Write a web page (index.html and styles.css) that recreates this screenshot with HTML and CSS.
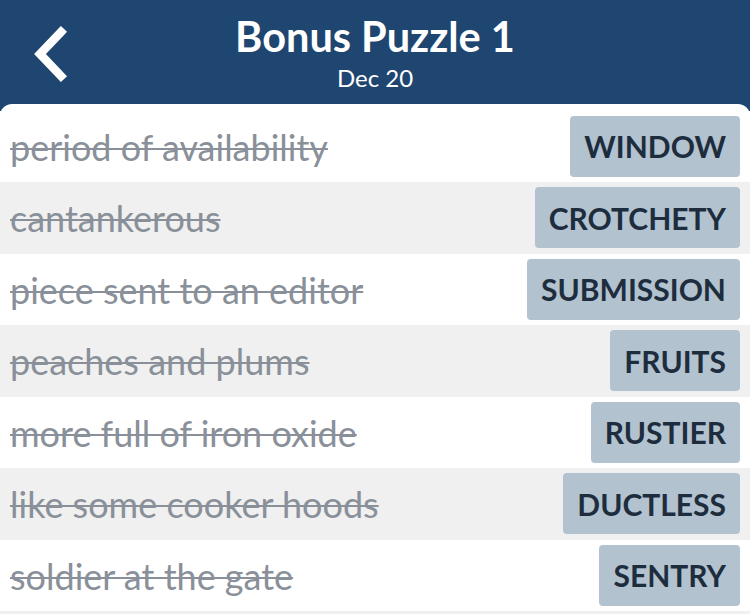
FILE: index.html
```html
<!DOCTYPE html>
<html>
<head>
<meta charset="utf-8">
<link rel="stylesheet" href="styles.css">
</head>
<body>
<div class="screen">
  <header class="topbar">
    <div class="back">
      <svg width="44" height="56" viewBox="0 0 44 56"><path d="M33 6 L12 28 L33 50" fill="none" stroke="#fff" stroke-width="8.5" stroke-linecap="square" stroke-linejoin="miter"/></svg>
    </div>
    <div class="titles">
      <div class="title">Bonus Puzzle 1</div>
      <div class="subtitle">Dec 20</div>
    </div>
  </header>
  <main class="card">
    <div class="row"><span class="clue">period of availability</span><span class="answer">WINDOW</span></div>
    <div class="row alt"><span class="clue">cantankerous</span><span class="answer">CROTCHETY</span></div>
    <div class="row"><span class="clue">piece sent to an editor</span><span class="answer">SUBMISSION</span></div>
    <div class="row alt"><span class="clue">peaches and plums</span><span class="answer">FRUITS</span></div>
    <div class="row"><span class="clue">more full of iron oxide</span><span class="answer">RUSTIER</span></div>
    <div class="row alt"><span class="clue">like some cooker hoods</span><span class="answer">DUCTLESS</span></div>
    <div class="row"><span class="clue">soldier at the gate</span><span class="answer">SENTRY</span></div>
  </main>
</div>
</body>
</html>
```
FILE: styles.css
```css
* { box-sizing: border-box; }
html, body { margin: 0; padding: 0; }
body {
  width: 750px;
  height: 614px;
  overflow: hidden;
  font-family: "Lato", "Noto Sans", sans-serif;
  background: #f0f0f0;
}
.screen {
  background: linear-gradient(#1f4670 0, #1f4670 130px, #f0f0f0 130px);
  height: 614px;
}
.topbar {
  height: 104px;
  display: flex;
  align-items: flex-start;
  position: relative;
}
.back {
  position: absolute;
  left: 28px;
  top: 26px;
}
.back svg { display: block; }
.titles {
  flex: 1;
  display: flex;
  flex-direction: column;
  align-items: center;
  color: #fff;
  padding-top: 11px;
}
.title {
  font-size: 41.5px;
  font-weight: 700;
  line-height: 50px;
}
.subtitle {
  font-size: 24px;
  line-height: 28px;
  margin-top: 3px;
}
.card {
  background: #fff;
  border-radius: 12px 12px 0 0;
  padding-top: 6.5px;
}
.row {
  height: 71.5px;
  display: flex;
  align-items: center;
  justify-content: space-between;
  padding: 0 10px;
  background: #fff;
}
.row.alt { background: #f0f0f0; }
.clue {
  font-size: 36px;
  color: #8a9099;
  text-decoration: line-through;
  text-decoration-thickness: 2px;
  margin-top: 1px;
}
.answer {
  height: 61px;
  display: flex;
  align-items: center;
  padding: 0 14px;
  background: #b2c2cf;
  border-radius: 4px;
  color: #1e2d3d;
  font-weight: 700;
  font-size: 30px;
}
```
